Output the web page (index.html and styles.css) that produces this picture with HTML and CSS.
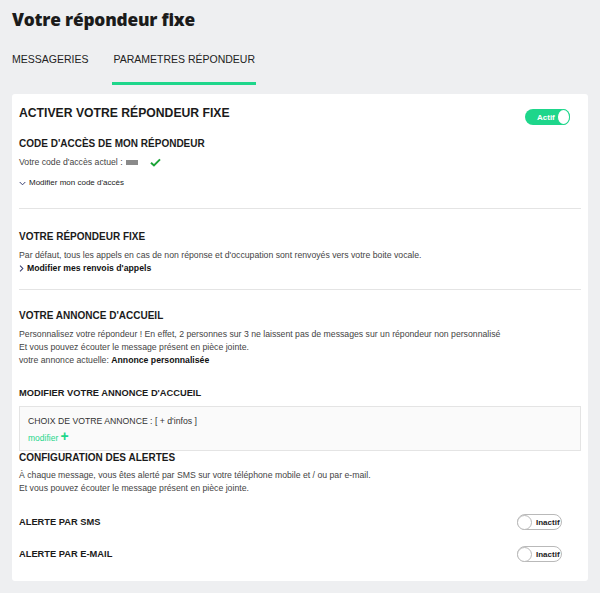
FILE: index.html
```html
<!DOCTYPE html>
<html lang="fr">
<head>
<meta charset="utf-8">
<title>Votre répondeur fixe</title>
<link rel="stylesheet" href="styles.css">
</head>
<body>
<div class="page">
  <h1 class="title">Votre répondeur fixe</h1>
  <nav class="tabs">
    <span class="tab">MESSAGERIES</span>
    <span class="tab active">PARAMETRES RÉPONDEUR</span>
  </nav>
  <div class="card">
    <div class="row-head">
      <h2 class="big">ACTIVER VOTRE RÉPONDEUR FIXE</h2>
      <span class="toggle on"><span class="tlabel">Actif</span><span class="knob"></span></span>
    </div>

    <h3 class="h code-h">CODE D'ACCÈS DE MON RÉPONDEUR</h3>
    <p class="txt code-line">Votre code d'accès actuel : <span class="mask"></span>
      <svg class="check" viewBox="0 0 12 10" width="11" height="9"><path d="M1 5.2 L4.3 8.3 L11 1.5" fill="none" stroke="#1aa336" stroke-width="2.2"/></svg></p>
    <p class="small-link"><svg class="chev" viewBox="0 0 8 5" width="7" height="5"><path d="M0.8 0.8 L4 4 L7.2 0.8" fill="none" stroke="#333a6e" stroke-width="1.1"/></svg>Modifier mon code d'accès</p>

    <hr class="sep sep1">

    <h3 class="h sec2">VOTRE RÉPONDEUR FIXE</h3>
    <p class="txt sec2t">Par défaut, tous les appels en cas de non réponse et d'occupation sont renvoyés vers votre boite vocale.</p>
    <p class="bold-link"><svg class="chevr" viewBox="0 0 5 8" width="5" height="7"><path d="M0.8 0.8 L4 4 L0.8 7.2" fill="none" stroke="#333a6e" stroke-width="1.2"/></svg>Modifier mes renvois d'appels</p>

    <hr class="sep sep2">

    <h3 class="h sec3">VOTRE ANNONCE D'ACCUEIL</h3>
    <p class="txt lines">Personnalisez votre répondeur ! En effet, 2 personnes sur 3 ne laissent pas de messages sur un répondeur non personnalisé<br>Et vous pouvez écouter le message présent en pièce jointe.<br>votre annonce actuelle: <b class="dark">Annonce personnalisée</b></p>

    <h3 class="h hs sec4">MODIFIER VOTRE ANNONCE D'ACCUEIL</h3>
    <div class="choice">
      <p class="choice-t">CHOIX DE VOTRE ANNONCE : [ + d'infos ]</p>
      <p class="modif">modifier <span class="plus">+</span></p>
    </div>

    <h3 class="h sec5">CONFIGURATION DES ALERTES</h3>
    <p class="txt lines">À chaque message, vous êtes alerté par SMS sur votre téléphone mobile et / ou par e-mail.<br>Et vous pouvez écouter le message présent en pièce jointe.</p>

    <div class="alert-row first">
      <h3 class="h hs">ALERTE PAR SMS</h3>
      <span class="toggle off"><span class="knob"></span><span class="tlabel">Inactif</span></span>
    </div>
    <div class="alert-row">
      <h3 class="h hs">ALERTE PAR E-MAIL</h3>
      <span class="toggle off"><span class="knob"></span><span class="tlabel">Inactif</span></span>
    </div>
  </div>
</div>
</body>
</html>
```

FILE: styles.css
```css
* { box-sizing: border-box; }
html, body { margin: 0; padding: 0; }
body {
  background: #eeeff1;
  font-family: "Liberation Sans", Arial, sans-serif;
  color: #222;
  width: 600px;
  height: 593px;
  overflow: hidden;
}
.page { padding: 0 12px 0 12px; }
.title {
  margin: 0;
  padding-top: 8px;
  font-family: "Open Sans", "DejaVu Sans", sans-serif;
  font-weight: 800;
  font-size: 17.3px;
  line-height: 24px;
  color: #1b1b1b;
  letter-spacing: -0.2px;
}
.tabs {
  display: flex;
  gap: 24px;
  margin-top: 18px;
  height: 35px;
}
.tab {
  font-size: 10.5px;
  color: #222;
  line-height: 14px;
  padding-top: 2px;
  height: 35px;
  border-bottom: 3px solid transparent;
}
.tab.active {
  border-bottom-color: #1ed68b;
  padding: 2px 1px 0 1px;
}
.card {
  background: #fff;
  border-radius: 3px;
  margin-top: 9px;
  padding: 8px 7px 12px 7px;
  height: 487px;
}
p { margin: 0; }
.row-head {
  display: flex;
  justify-content: space-between;
  align-items: flex-start;
}
.big {
  margin: 3px 0 0 0;
  font-size: 12.2px;
  line-height: 16px;
  font-weight: bold;
  color: #1b1b1b;
}
.toggle {
  display: inline-flex;
  align-items: center;
  height: 16px;
  width: 45px;
  border-radius: 8px;
  font-size: 8px;
  font-weight: bold;
}
.toggle.on {
  background: #1ed68b;
  color: #fff;
  justify-content: flex-end;
  margin: 7px 11px 0 0;
  padding-left: 12px;
}
.toggle.on .knob {
  width: 16px;
  height: 16px;
  border-radius: 50%;
  background: #fff;
  border: 1.5px solid #1ed68b;
  margin-left: 2px;
}
.toggle.off {
  background: #fff;
  border: 1px solid #b9b9b9;
  color: #222;
  gap: 4px;
}
.toggle.off .knob {
  width: 15px;
  height: 15px;
  border-radius: 50%;
  background: #fff;
  border: 1px solid #b9b9b9;
  margin-left: -1px;
}
.h {
  margin: 0;
  font-size: 10px;
  line-height: 14px;
  font-weight: bold;
  color: #1b1b1b;
}
.hs { font-size: 9.3px; }
.code-h { margin-top: 12px; }
.txt {
  font-size: 8.7px;
  line-height: 13px;
  color: #444;
}
.code-line {
  margin-top: 5px;
  display: flex;
  align-items: center;
}
.mask {
  display: inline-block;
  width: 12px;
  height: 5px;
  background: #8a8a8a;
  margin: 0 12px 0 3px;
}
.small-link {
  font-size: 8px;
  line-height: 12px;
  color: #222;
  margin-top: 8px;
  display: flex;
  align-items: center;
  gap: 3px;
}
.sep {
  border: 0;
  border-top: 1px solid #e4e4e4;
  margin: 19px 0 0 0;
}
.sec2 { margin-top: 21px; }
.sec2t { margin-top: 5px; }
.bold-link {
  font-size: 8.7px;
  font-weight: bold;
  line-height: 13px;
  color: #111;
  display: flex;
  align-items: center;
  gap: 3px;
}
.sep2 { margin-top: 14px; }
.sec3 { margin-top: 19px; }
.sec3 + .txt { margin-top: 5px; }
.dark { color: #111; }
.sec4 { margin-top: 19px; }
.choice {
  margin-top: 6px;
  background: #fafafa;
  border: 1px solid #e4e4e4;
  height: 45px;
  padding: 8px 8px 6px;
}
.choice-t {
  font-size: 8.7px;
  line-height: 13px;
  color: #333;
}
.modif {
  font-size: 8.5px;
  line-height: 12px;
  color: #1ed68b;
  margin-top: 3px;
}
.plus {
  font-size: 14px;
  font-weight: bold;
  line-height: 10px;
}
.sec5 { margin-top: 0; }
.sec5 + .txt { margin-top: 4px; }
.alert-row {
  display: flex;
  justify-content: space-between;
  align-items: center;
  padding-right: 19px;
  height: 16px;
}
.alert-row.first { margin-top: 19px; }
.alert-row + .alert-row { margin-top: 16px; }
```
